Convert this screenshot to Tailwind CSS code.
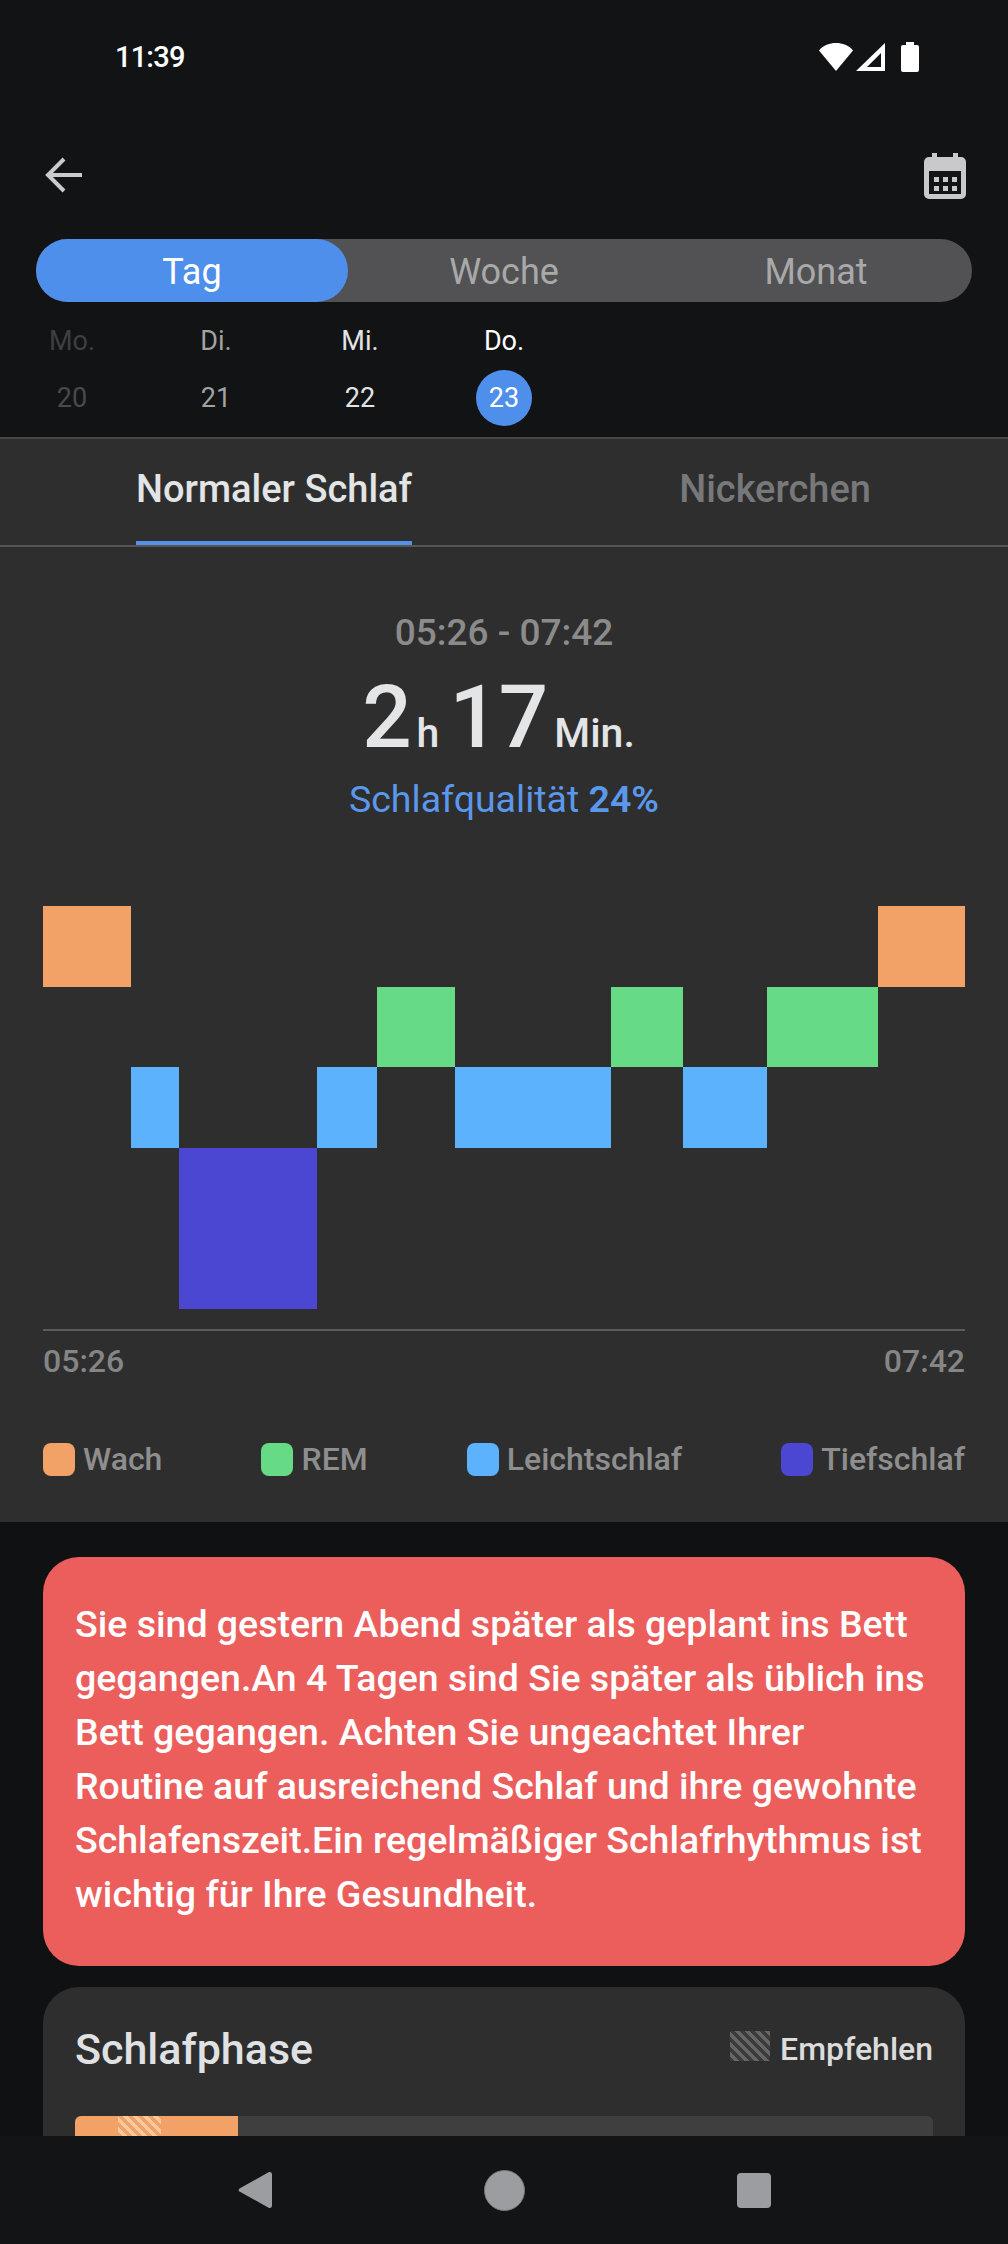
<!DOCTYPE html>
<html lang="de">
<head>
    <meta charset="UTF-8">
    <meta name="viewport" content="width=device-width, initial-scale=1.0">
    <title>Schlaf</title>
    <script src="https://cdn.jsdelivr.net/npm/@tailwindcss/browser@4"></script>
</head>
<body class="bg-[#111315] font-['Roboto',sans-serif]">
<div class="w-[1008px] h-[2244px] flex flex-col overflow-hidden">

    <!-- Status bar -->
    <div class="h-[130px] shrink-0 flex justify-between pl-[115px] pr-[88px] pt-[40px]">
        <span class="text-[29px] leading-[34px] font-medium text-white tracking-[-0.8px]">11:39</span>
        <div class="flex items-start gap-[3px] pt-[2px]">
            <svg width="34" height="29" viewBox="0 0 34 29"><path d="M0 8.500C4.500 3 10.500 1 17 1s12.500 2 17 7.500L17 29z" fill="#fff"/></svg>
            <svg width="30" height="29" viewBox="0 0 30 29"><path fill-rule="evenodd" d="M29 1v28H0zM25 11 11 25h14z" fill="#fff"/></svg>
            <svg class="ml-[12px] mr-[1px]" width="18" height="30" viewBox="0 0 18 30"><path d="M5 0h8v3h3a2 2 0 0 1 2 2v23a2 2 0 0 1-2 2H2a2 2 0 0 1-2-2V5a2 2 0 0 1 2-2h3z" fill="#fff"/></svg>
        </div>
    </div>

    <!-- Toolbar -->
    <div class="h-[109px] shrink-0 flex justify-between items-start pl-[44px] pr-[42px]">
        <svg class="mt-[27px]" width="38" height="36" viewBox="0 0 38 36"><path d="M38 18H4M20 2 4 18l16 16" fill="none" stroke="#cbcbcb" stroke-width="4"/></svg>
        <svg class="mt-[23px]" width="42" height="46" viewBox="0 0 42 46"><path fill-rule="evenodd" d="M8 0h5v4h16V0h5v4h3a5 5 0 0 1 5 5v32a5 5 0 0 1-5 5H5a5 5 0 0 1-5-5V9a5 5 0 0 1 5-5h3zM5 18v23h32V18z" fill="#c9c9cb"/><path d="M10 24h5v5h-5zM19 24h5v5h-5zM28 24h5v5h-5zM10 33h5v5h-5zM19 33h5v5h-5zM28 33h5v5h-5z" fill="#c9c9cb"/></svg>
    </div>

    <!-- Tag / Woche / Monat -->
    <div class="mx-[36px] h-[63px] shrink-0 rounded-full bg-[#525254] grid grid-cols-3 grid-rows-[63px] text-[36px] leading-[66px] text-center text-[#a9a9aa]">
        <div class="rounded-full bg-[#4f8fec] text-white">Tag</div>
        <div>Woche</div>
        <div>Monat</div>
    </div>

    <!-- Days -->
    <div class="h-[135px] shrink-0 grid grid-cols-7 text-center text-[27px] pt-[21px]">
        <div class="text-[#3f3f41]"><div class="leading-[36px]">Mo.</div><div class="mt-[11px] h-[56px] leading-[56px] text-[#4a4a4c]">20</div></div>
        <div class="text-[#a2a2a3]"><div class="leading-[36px]">Di.</div><div class="mt-[11px] h-[56px] leading-[56px]">21</div></div>
        <div class="text-[#e4e4e5]"><div class="leading-[36px]">Mi.</div><div class="mt-[11px] h-[56px] leading-[56px]">22</div></div>
        <div class="text-white"><div class="leading-[36px]">Do.</div><div class="mt-[11px] mx-auto w-[56px] h-[56px] leading-[56px] rounded-full bg-[#4f8fec]">23</div></div>
    </div>

    <!-- Scroll area -->
    <div class="flex-1 min-h-0 overflow-hidden bg-[#101112]">
        <div class="h-[1085px] bg-[#2e2e2e] border-t-2 border-[#484849]">
            <div class="h-[106px] flex justify-between pl-[136px] pr-[137px] border-b-2 border-[#555556] box-content text-[38px] font-medium leading-[100px]">
                <div class="h-[106px] border-b-4 border-[#5591e8] text-[#e2e4e6]">Normaler Schlaf</div>
                <div class="text-[#77787a]">Nickerchen</div>
            </div>

            <div class="pt-[66px] text-center">
                <div class="text-[37px] leading-[40px] font-medium text-[#8b8b8b]">05:26 - 07:42</div>
                <div class="mt-[20px] h-[88px] pr-[11px] text-[87px] leading-[88px] font-medium text-[#e3e5e7]">2<span class="text-[41px] leading-none ml-[5px]">h</span><span class="ml-[10px]">17</span><span class="text-[41px] leading-none ml-[6px]">Min.</span></div>
                <div class="mt-[18px] text-[37.500px] leading-[40px] text-[#5b97ea]">Schlafqualität <span class="font-semibold">24%</span></div>
            </div>

            <!-- Phases chart -->
            <div class="mt-[87px] mx-[43px] h-[423px] flex items-start border-b-2 border-[#5c5c5d] box-content">
                <div class="w-[88px] h-[81px] bg-[#f2a266]"></div>
                <div class="w-[48px] h-[81px] mt-[161px] bg-[#5cb2fd]"></div>
                <div class="w-[138px] h-[161px] mt-[242px] bg-[#4b47d3]"></div>
                <div class="w-[60px] h-[81px] mt-[161px] bg-[#5cb2fd]"></div>
                <div class="w-[78px] h-[80px] mt-[81px] bg-[#67da86]"></div>
                <div class="w-[156px] h-[81px] mt-[161px] bg-[#5cb2fd]"></div>
                <div class="w-[72px] h-[80px] mt-[81px] bg-[#67da86]"></div>
                <div class="w-[84px] h-[81px] mt-[161px] bg-[#5cb2fd]"></div>
                <div class="w-[111px] h-[80px] mt-[81px] bg-[#67da86]"></div>
                <div class="w-[87px] h-[81px] bg-[#f2a266]"></div>
            </div>
            <div class="mx-[43px] mt-[12px] flex justify-between text-[32px] leading-[36px] font-medium text-[#858586]">
                <span>05:26</span><span>07:42</span>
            </div>

            <!-- Legend -->
            <div class="mx-[43px] mt-[62px] flex justify-between text-[32px] leading-[36px] font-medium text-[#8e8e8f]">
                <div class="flex items-center gap-[8px]"><span class="w-[32px] h-[33px] rounded-lg bg-[#f2a266]"></span>Wach</div>
                <div class="flex items-center gap-[8px]"><span class="w-[32px] h-[33px] rounded-lg bg-[#67da86]"></span>REM</div>
                <div class="flex items-center gap-[8px]"><span class="w-[32px] h-[33px] rounded-lg bg-[#5cb2fd]"></span>Leichtschlaf</div>
                <div class="flex items-center gap-[8px]"><span class="w-[32px] h-[33px] rounded-lg bg-[#4b47d3]"></span>Tiefschlaf</div>
            </div>
        </div>

        <!-- Hint card -->
        <div class="mx-[43px] mt-[35px] h-[409px] rounded-[36px] bg-[#ec5e5c] pl-[32px] pr-[24px] pt-[40px] text-[37.500px] leading-[54px] font-medium text-white">
            Sie sind gestern Abend später als geplant ins Bett gegangen.An 4 Tagen sind Sie später als üblich ins Bett gegangen. Achten Sie ungeachtet Ihrer Routine auf ausreichend Schlaf und ihre gewohnte Schlafenszeit.Ein regelmäßiger Schlafrhythmus ist wichtig für Ihre Gesundheit.
        </div>

        <!-- Schlafphase card -->
        <div class="mx-[43px] mt-[21px] h-[300px] rounded-[36px] bg-[#2e2e2e] px-[32px] pt-[37px]">
            <div class="flex justify-between items-center h-[50px]">
                <span class="text-[43px] font-medium text-[#dfe1e3]">Schlafphase</span>
                <span class="flex items-center gap-[10px] text-[32px] font-medium text-[#dcdcdd]">
                    <span class="w-[40px] h-[30px] -mt-[6px] bg-[repeating-linear-gradient(45deg,#3b3b3b_0px,#3b3b3b_3.500px,#666667_3.500px,#666667_7px)]"></span>Empfehlen
                </span>
            </div>
            <div class="mt-[42px] h-[40px] rounded-t-[6px] bg-[#3f3f40] overflow-hidden">
                <div class="w-[163px] h-full bg-[#f2a266] pl-[43px]">
                    <div class="w-[43px] h-full bg-[repeating-linear-gradient(45deg,#f2a266_0px,#f2a266_3.500px,#f9c9a0_3.500px,#f9c9a0_7px)]"></div>
                </div>
            </div>
        </div>
    </div>

    <!-- Navigation bar -->
    <div class="h-[108px] shrink-0 bg-[#121416] flex items-start justify-center pt-[34px]">
        <svg class="mr-[212px]" width="34" height="40" viewBox="0 0 34 40"><path d="M31 2a2.500 2.500 0 0 1 3 2v32a2.500 2.500 0 0 1-3 2L1.500 21.500a2 2 0 0 1 0-3z" fill="#9c9da0"/></svg>
        <div class="w-[41px] h-[41px] rounded-full bg-[#9c9da0] border border-[#77787a]"></div>
        <div class="ml-[212px] mt-[3px] w-[34px] h-[35px] rounded-[4px] bg-[#9c9da0]"></div>
    </div>
</div>
</body>
</html>
